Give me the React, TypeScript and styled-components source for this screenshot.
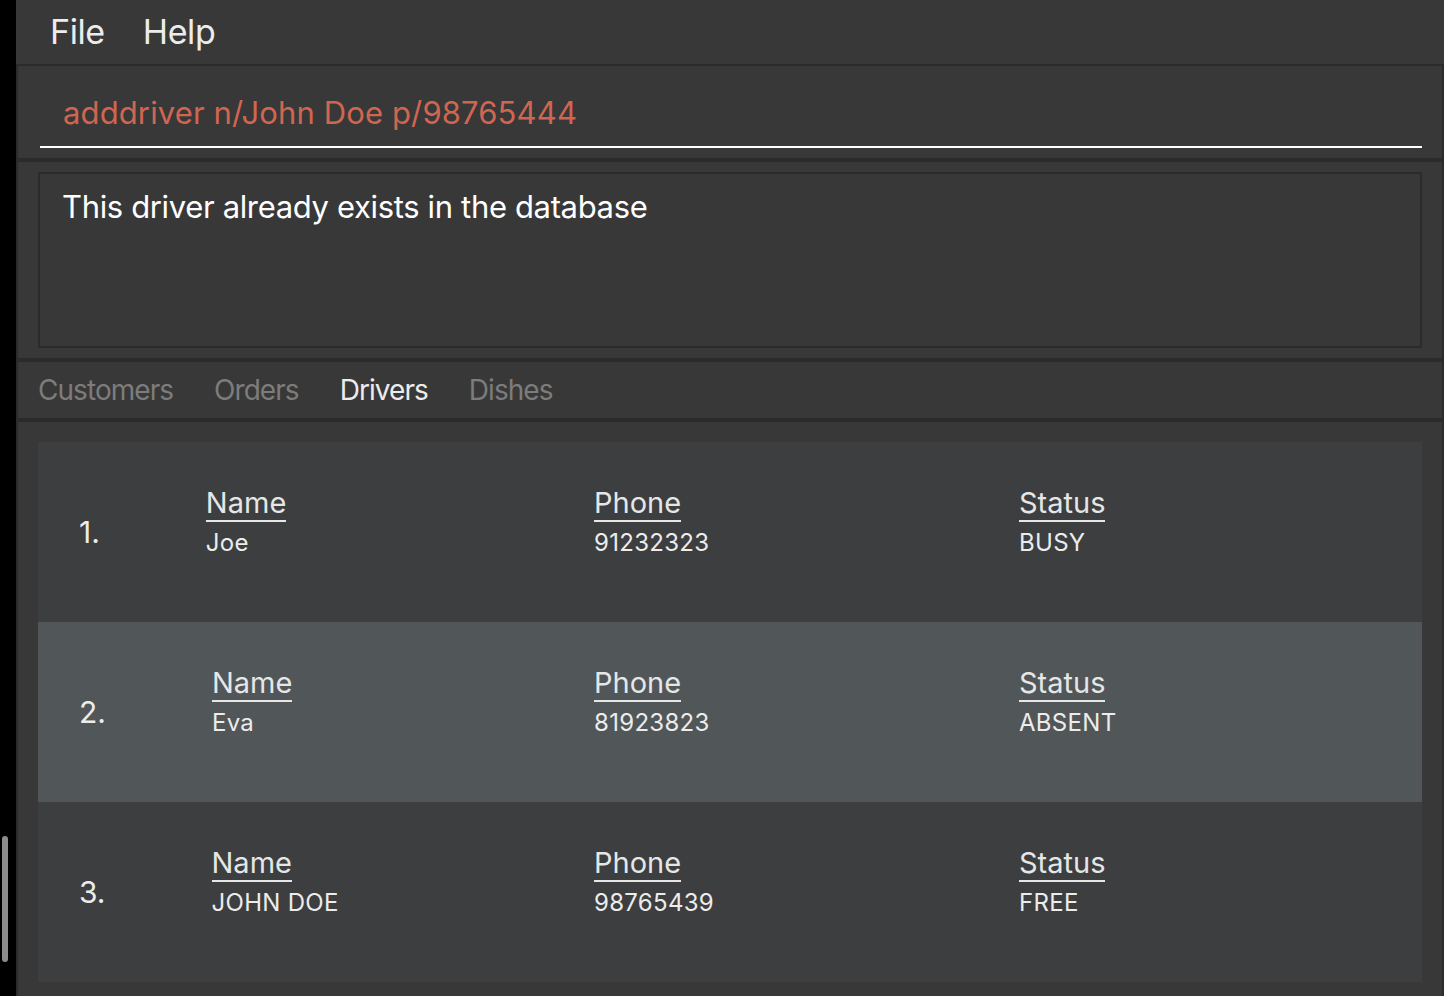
import React from "react";
import styled, { createGlobalStyle } from "styled-components";

const Global = createGlobalStyle`
  html, body { margin: 0; padding: 0; background: #000; }
  body { font-family: "Inter", "Noto Sans", sans-serif; overflow: hidden; }
  * { box-sizing: border-box; }
`;

const Shell = styled.div`
  display: flex;
  width: 1444px;
  height: 996px;
  background: #000;
`;

const Gutter = styled.div`
  width: 16px;
  display: flex;
  flex-direction: column;
  justify-content: flex-end;
  padding: 0 0 34px 2px;
`;

const Thumb = styled.div`
  width: 6px;
  height: 126px;
  border-radius: 3px;
  background: #8c8c8c;
`;

const Window = styled.div`
  flex: 1;
  display: flex;
  flex-direction: column;
  background: #383838;
`;

const MenuBar = styled.div`
  height: 66px;
  flex-shrink: 0;
  display: flex;
  align-items: center;
  gap: 38px;
  padding: 0 0 2px 34px;
  border-bottom: 2px solid #2b2b2b;
`;

const MenuItem = styled.span`
  color: #ececec;
  font-size: 34px;
  letter-spacing: -0.4px;
`;

const Body = styled.div`
  flex: 1;
  display: flex;
  flex-direction: column;
  border-left: 2px solid #2b2b2b;
  border-right: 2px solid #2b2b2b;
  gap: 4px;
  background: #2b2b2b;
`;

const CommandPane = styled.div`
  height: 92px;
  background: #383838;
  padding: 0 20px 10px 22px;
  display: flex;
  align-items: flex-end;
`;

const CommandField = styled.div`
  flex: 1;
  height: 70px;
  border-bottom: 2px solid #ffffff;
  padding: 0 0 0 23px;
  display: flex;
  align-items: center;
  color: #d06651;
  font-size: 31px;
  letter-spacing: 0.13px;
`;

const ResultPane = styled.div`
  height: 196px;
  background: #383838;
  padding: 10px 20px 10px 20px;
  display: flex;
`;

const ResultBox = styled.div`
  flex: 1;
  border: 2px solid #2b2b2b;
  padding: 14px 22px;
  color: #ffffff;
  font-size: 31px;
  letter-spacing: -0.35px;
`;

const TabBar = styled.div`
  height: 56px;
  background: #383838;
  display: flex;
  align-items: center;
  gap: 41px;
  padding: 0 0 0 20px;
`;

const Tab = styled.span<{ $active?: boolean }>`
  color: ${(p) => (p.$active ? "#ececec" : "#7c7c7c")};
  font-size: 28px;
  letter-spacing: -0.95px;
`;

const ListPane = styled.div`
  flex: 1;
  background: #383838;
  padding: 20px 20px 0 20px;
  display: flex;
  flex-direction: column;
`;

const Card = styled.div<{ $odd?: boolean }>`
  height: 180px;
  background: ${(p) => (p.$odd ? "#515658" : "#3c3e3f")};
  display: flex;
  align-items: center;
  padding: 0 0 0 41px;
`;

const Lead = styled.div`
  width: 515px;
  display: flex;
  align-items: center;
`;

const Index = styled.span`
  color: #ececec;
  font-size: 30px;
  margin-right: 106px;
`;

const Field = styled.div<{ $w?: number }>`
  width: ${(p) => (p.$w ? `${p.$w}px` : "auto")};
  display: flex;
  flex-direction: column;
  margin-top: -20px;
`;

const Header = styled.span`
  align-self: flex-start;
  color: #e6e6e6;
  font-size: 29px;
  letter-spacing: 0px;
  line-height: 34px;
  border-bottom: 2px solid #e6e6e6;
`;

const Value = styled.span`
  color: #ececec;
  font-size: 24px;
  letter-spacing: 0.3px;
  line-height: 30px;
  margin-top: 6px;
`;

const drivers = [
  { name: "Joe", phone: "91232323", status: "BUSY" },
  { name: "Eva", phone: "81923823", status: "ABSENT" },
  { name: "JOHN DOE", phone: "98765439", status: "FREE" },
];

export default function App() {
  return (
    <>
      <Global />
      <Shell>
        <Gutter>
          <Thumb />
        </Gutter>
        <Window>
          <MenuBar>
            <MenuItem>File</MenuItem>
            <MenuItem>Help</MenuItem>
          </MenuBar>
          <Body>
            <CommandPane>
              <CommandField>adddriver n/John Doe p/98765444</CommandField>
            </CommandPane>
            <ResultPane>
              <ResultBox>This driver already exists in the database</ResultBox>
            </ResultPane>
            <TabBar>
              <Tab>Customers</Tab>
              <Tab>Orders</Tab>
              <Tab $active>Drivers</Tab>
              <Tab>Dishes</Tab>
            </TabBar>
            <ListPane>
              {drivers.map((d, i) => (
                <Card key={i} $odd={i % 2 === 1}>
                  <Lead>
                    <Index>{i + 1}.</Index>
                    <Field>
                      <Header>Name</Header>
                      <Value>{d.name}</Value>
                    </Field>
                  </Lead>
                  <Field $w={425}>
                    <Header>Phone</Header>
                    <Value>{d.phone}</Value>
                  </Field>
                  <Field $w={300}>
                    <Header>Status</Header>
                    <Value>{d.status}</Value>
                  </Field>
                </Card>
              ))}
            </ListPane>
          </Body>
        </Window>
      </Shell>
    </>
  );
}
